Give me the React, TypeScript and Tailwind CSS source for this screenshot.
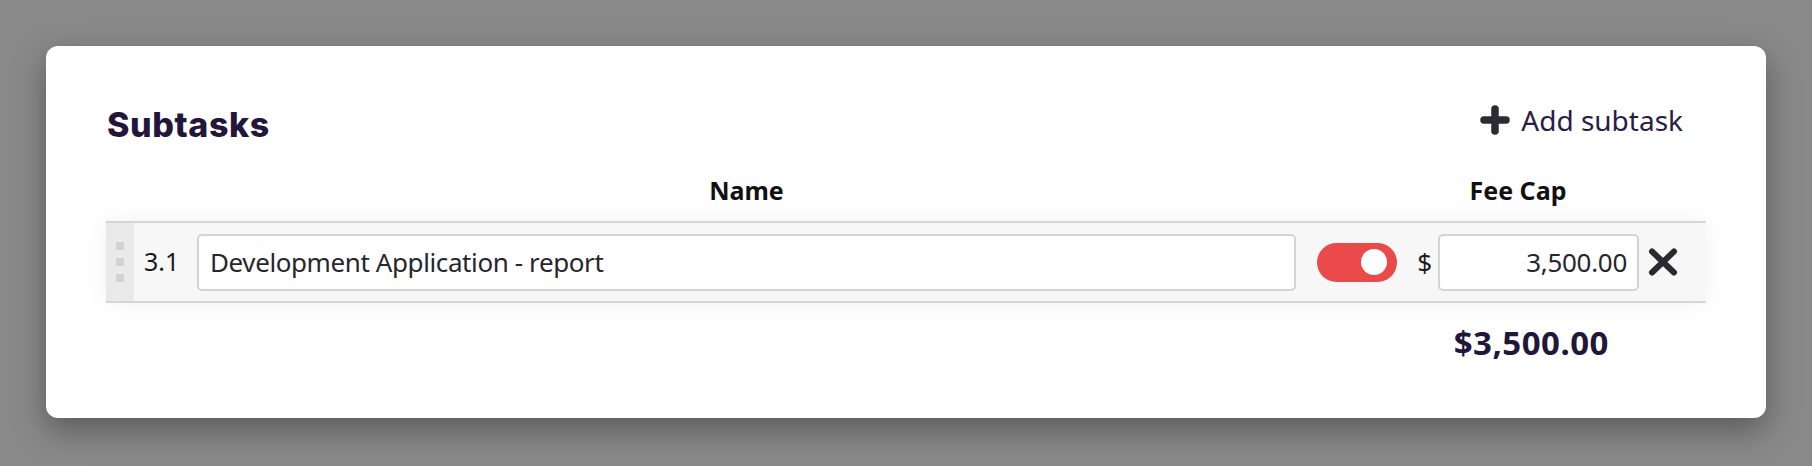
import { useState } from "react"

const PlusIcon = () => (
    <svg width="30" height="30" viewBox="0 0 30 30" className="shrink-0">
        <path d="M15 4v22M4 15h22" stroke="#2c2b33" strokeWidth="7.5" strokeLinecap="round" fill="none" />
    </svg>
)

const CloseIcon = () => (
    <svg width="30" height="28" viewBox="0 0 30 28" className="shrink-0">
        <path d="M4 3.5l22 21M26 3.5l-22 21" stroke="#2a2a30" strokeWidth="6" strokeLinecap="round" fill="none" />
    </svg>
)

const DragHandle = () => (
    <div className="flex h-full w-[28px] shrink-0 flex-col items-center justify-center gap-[8px] bg-[#e9e9e9]">
        <span className="h-[8px] w-[8px] bg-[#d2d2d2]" />
        <span className="h-[8px] w-[8px] bg-[#d2d2d2]" />
        <span className="h-[8px] w-[8px] bg-[#d2d2d2]" />
    </div>
)

const Toggle = ({ on, onChange }: { on: boolean; onChange: () => void }) => (
    <button
        onClick={onChange}
        className={`flex h-[39px] w-[80px] shrink-0 items-center rounded-full px-[10px] ${on ? "justify-end bg-[#ea4a4a]" : "justify-start bg-[#cfcfcf]"}`}
    >
        <span className="h-[26px] w-[26px] rounded-full bg-white" />
    </button>
)

export default function App() {
    const [enabled, setEnabled] = useState(true)
    const [name, setName] = useState("Development Application - report")
    const [fee, setFee] = useState("3,500.00")

    return (
        <div className="min-h-[466px] w-full bg-[#898989] pt-[46px] pl-[46px] font-['Noto_Sans',sans-serif]">
            <div className="flex h-[372px] w-[1720px] flex-col rounded-[12px] bg-white px-[60px] pt-[59px] shadow-[0_12px_32px_rgba(0,0,0,0.35)]">
                <div className="flex h-[40px] items-center justify-between">
                    <h2 className="pl-[1px] font-['Inter',sans-serif] text-[34px] leading-[40px] font-extrabold tracking-[0.6px] text-[#23163b]">
                        Subtasks
                    </h2>
                    <button className="mr-[23px] -mt-[10px] flex items-center gap-[11px] text-[28px] leading-[36px] text-[#2a1c45]">
                        <PlusIcon />
                        <span>Add subtask</span>
                    </button>
                </div>

                <div className="mt-[29px] flex h-[32px] items-center text-[25px] leading-[32px] font-bold text-[#111]">
                    <div className="w-[91px]" />
                    <div className="w-[1099px] text-center">Name</div>
                    <div className="w-[168px]" />
                    <div className="w-[108px] text-center">Fee Cap</div>
                </div>

                <div className="mt-[15px] flex h-[82px] items-center border-y-2 border-[#d6d6d6] bg-[#f7f7f7] shadow-[0_0_24px_rgba(0,0,0,0.06)]">
                    <DragHandle />
                    <div className="w-[63px] shrink-0 pl-[10px] text-[25px] text-[#1a1a1a]">3.1</div>
                    <input
                        value={name}
                        onChange={e => setName(e.target.value)}
                        className="h-[57px] min-w-0 flex-1 rounded-[5px] border-2 border-[#d3d3d3] bg-white px-[11px] text-[26px] tracking-[-0.4px] text-[#26262e] outline-none"
                    />
                    <div className="ml-[21px]">
                        <Toggle on={enabled} onChange={() => setEnabled(!enabled)} />
                    </div>
                    <span className="ml-[20px] text-[26px] text-[#1a1a1a]">$</span>
                    <input
                        value={fee}
                        onChange={e => setFee(e.target.value)}
                        className="ml-[6px] h-[57px] w-[201px] shrink-0 rounded-[5px] border-2 border-[#d3d3d3] bg-white px-[10px] text-right text-[26px] tracking-[-0.3px] text-[#26262e] outline-none"
                    />
                    <button className="ml-[9px] mr-[28px]">
                        <CloseIcon />
                    </button>
                </div>

                <div className="mt-[20px] flex justify-end pr-[97px]">
                    <span className="text-[33px] leading-[40px] font-bold tracking-[0.5px] text-[#23163b]">$3,500.00</span>
                </div>
            </div>
        </div>
    )
}
